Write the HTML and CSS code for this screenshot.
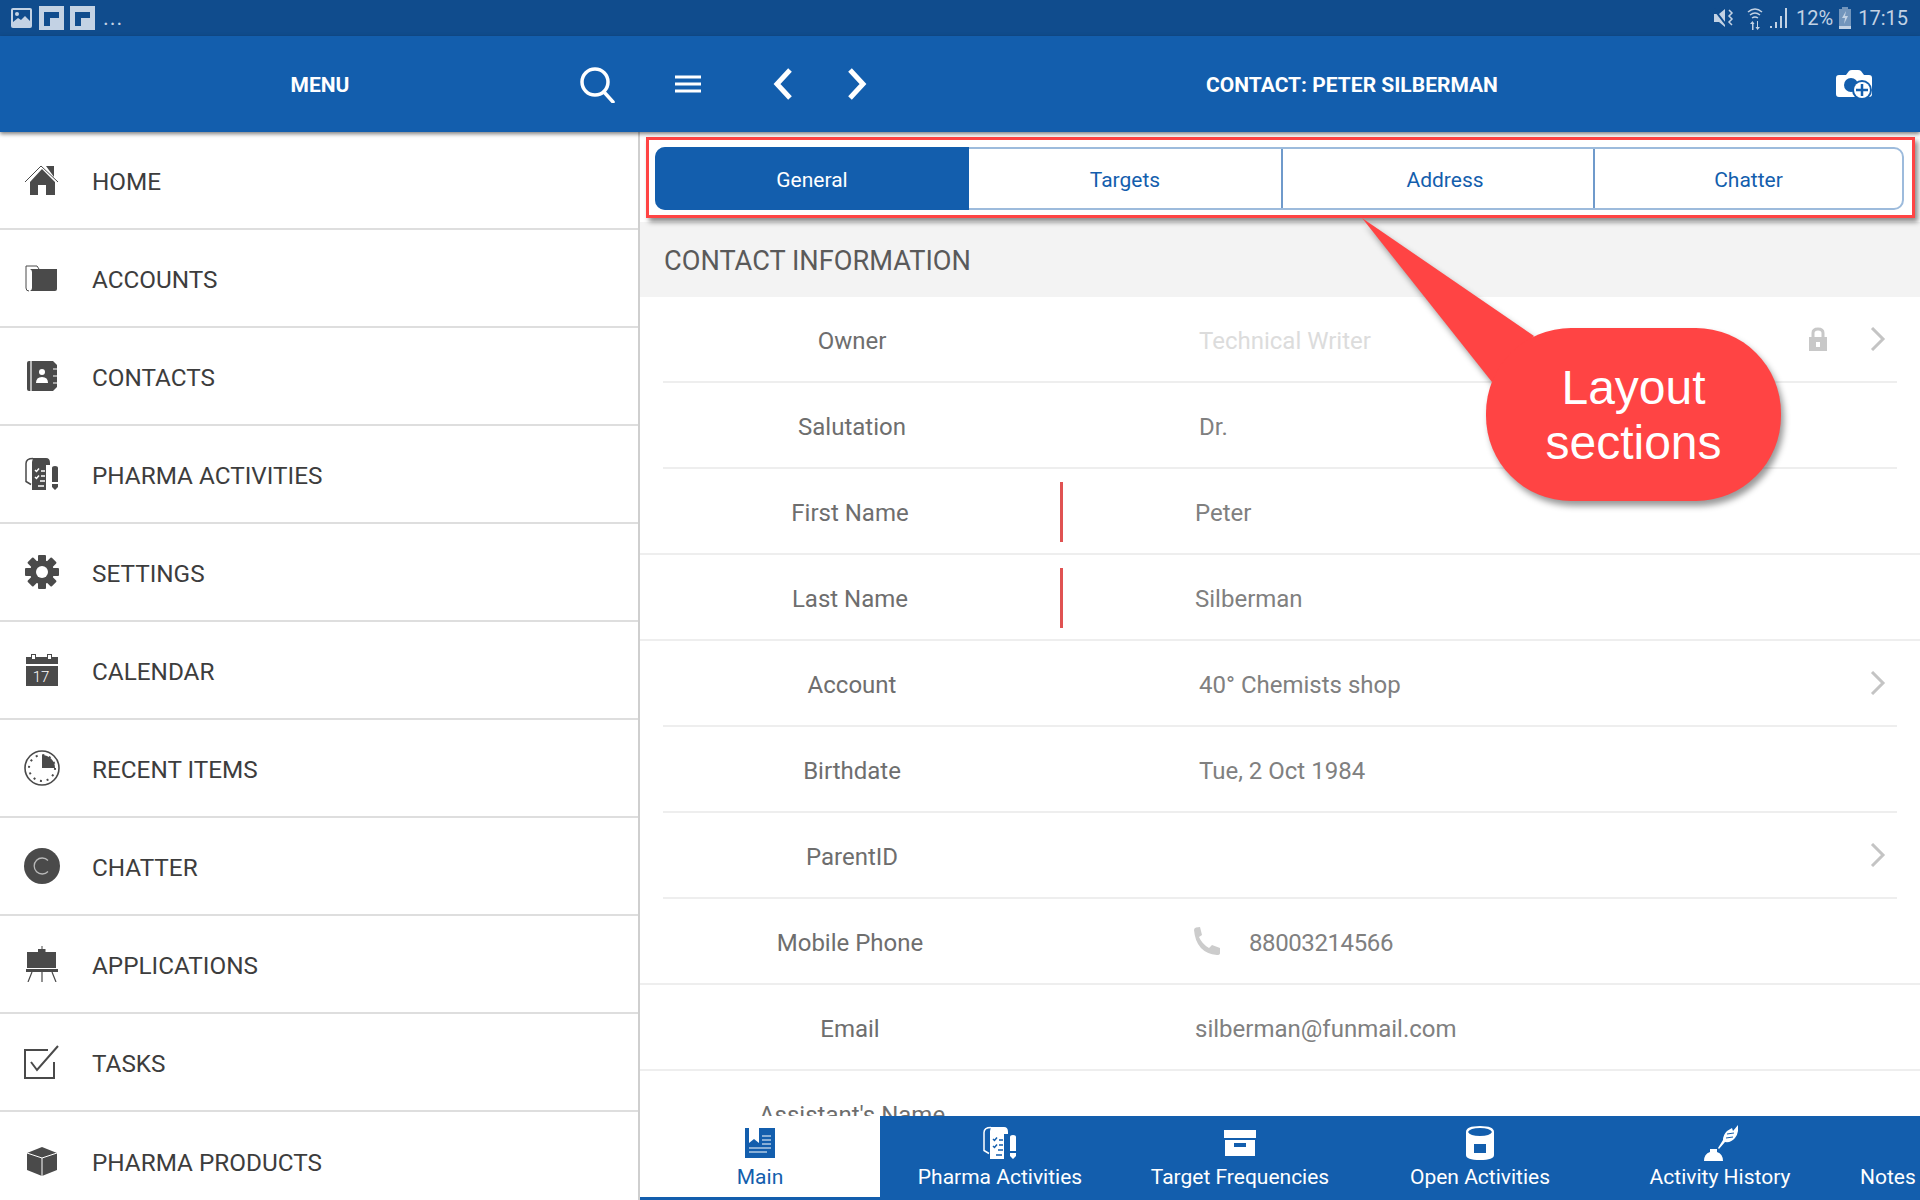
FILE: index.html
```html
<!DOCTYPE html>
<html>
  <head>
    <title>Contact: Peter Silberman</title>
    <link rel="stylesheet" href="styles.css">
  </head>
  <body>
    <svg class="defs" width="0" height="0">
      <symbol id="i-pharma" viewBox="0 0 36 36">
        <path d="M9 2h13q4 0 4 5v2h-4v25H8V6z"/>
        <path class="line" d="M9 2.500q-7 0-7 5v18l5 3" fill="none" stroke="currentColor" stroke-width="1.500"/>
        <path class="cut" d="M11 14l1.500 1.500 2.500-3M11 21l1.500 1.500 2.500-3M17 15h4M17 20h4M16 25h5M14 30h6" fill="none" stroke-width="1.500"/>
        <path d="M28 12q0-2 3-2t3 2v14h-6zM28 28h6v3l-3 3-3-3z"/>
      </symbol>
    </svg>

    <div class="statusbar">
      <div class="status-left">
        <svg class="st-img" viewBox="0 0 21 20"><rect width="21" height="20" rx="2"/><path class="st-cut" d="M2 2h17v11l-5-5-4 4-3-2-5 4z"/><circle cx="6" cy="6" r="2"/></svg>
        <svg class="st-tile" viewBox="0 0 25 24"><rect width="25" height="24"/><path class="st-cut" d="M5 6h15v7h-8v7H5z"/><path d="M11 12h9v1h-8v7h-1z"/></svg>
        <svg class="st-tile" viewBox="0 0 25 24"><rect width="25" height="24"/><path class="st-cut" d="M5 6h15v7h-8v7H5z"/><path d="M11 12h9v1h-8v7h-1z"/></svg>
        <span class="st-dots">...</span>
      </div>
      <div class="status-right">
        <svg class="st-mute" viewBox="0 0 20 20"><path d="M0 6h5l6-5v18l-6-5H0z"/><path class="st-slash" d="M0 1l13 17"/><path d="M15 2l3 3-3 3 3 3-3 3 3 3" fill="none" stroke="currentColor" stroke-width="1.500"/></svg>
        <svg class="st-wifi" viewBox="0 0 16 24"><path d="M1 6q7-6 14 0M3 9q5-4 10 0M5 12q3-2 6 0" fill="none" stroke="currentColor" stroke-width="1.500"/><path d="M5 24v-6l-2 0 2.500-3 2 3H6.500v6zM11 15v6h2l-2.500 3-2-3h1.500v-6z"/></svg>
        <svg class="st-signal" viewBox="0 0 18 20"><path d="M0 18h2v2H0zM5 14h2v6H5zM10 8h2v12h-2zM15 0h2v20h-2z"/></svg>
        <span class="st-percent">12%</span>
        <svg class="st-batt" viewBox="0 0 12 22"><path d="M3 0h6v2h3v20H0V2h3z" opacity=".55"/><path d="M0 19h12v3H0zM7 4l-4 7h3l-1 6 4-8H6z"/></svg>
        <span class="st-time">17:15</span>
      </div>
    </div>

    <div class="header">
      <div class="header-menu">
        <span></span>
        <span class="header-title">MENU</span>
        <svg class="ic-search" viewBox="0 0 36 36"><circle cx="15" cy="15" r="13"/><path d="M24 25l9 10"/></svg>
      </div>
      <div class="header-main">
        <div class="header-nav">
          <svg class="ic-burger" viewBox="0 0 30 20"><path d="M2 3h26M2 10h26M2 17h26"/></svg>
          <svg class="ic-chev" viewBox="0 0 22 34"><path d="M18 3L5 17l13 14"/></svg>
          <svg class="ic-chev ic-next" viewBox="0 0 22 34"><path d="M4 3l13 14L4 31"/></svg>
        </div>
        <span class="header-title header-contact">CONTACT: PETER SILBERMAN</span>
        <div class="header-action">
          <svg class="ic-camera" viewBox="0 0 36 32">
            <path d="M3 7h7l3-4q1-1 3-1h6q2 0 3 1l3 4h5q3 0 3 3v16q0 3-3 3H3q-3 0-3-3V10q0-3 3-3z" fill="#fff"/>
            <circle cx="15" cy="17" r="7" fill="#135ead"/>
            <circle cx="26" cy="22" r="10" fill="#135ead"/>
            <circle cx="26" cy="22" r="8" fill="#fff"/>
            <path d="M26 16v12M20 22h12" stroke="#135ead" stroke-width="2.500"/>
          </svg>
        </div>
      </div>
    </div>

    <div class="app">
      <div class="sidebar">
        <div class="menu-item">
          <svg class="menu-icon" viewBox="0 0 36 36"><path class="thin" d="M1 20L17 4l17 16" fill="none" stroke="currentColor" stroke-width="1"/><path d="M18 7l13 13v13h-9V23h-8v10H6V20zM22 4h8v11z"/></svg>
          <span>HOME</span>
        </div>
        <div class="menu-item">
          <svg class="menu-icon" viewBox="0 0 36 36"><path d="M5 31q-3 0-3-3V6h11l2 3" fill="none" stroke="currentColor" stroke-width="1"/><path d="M6 9h27v20q0 2-2 2H6q2-1 2-3V12q0-2-2-3z"/></svg>
          <span>ACCOUNTS</span>
        </div>
        <div class="menu-item">
          <svg class="menu-icon" viewBox="0 0 36 36"><path d="M5 3h24l4 4v22l-4 4H5q-2 0-2-2V5q0-2 2-2z"/><path class="cut" d="M7 3v30M29 11h4M29 18h4M29 25h4" fill="none" stroke-width="1.200"/><circle class="fill-cut" cx="18" cy="14" r="3"/><path class="fill-cut" d="M12 25q0-6 6-6t6 6z"/></svg>
          <span>CONTACTS</span>
        </div>
        <div class="menu-item">
          <svg class="menu-icon"><use href="#i-pharma"/></svg>
          <span>PHARMA ACTIVITIES</span>
        </div>
        <div class="menu-item">
          <svg class="menu-icon" viewBox="0 0 36 36">
            <circle cx="18" cy="18" r="12"/>
            <rect x="14" y="1" width="8" height="34" rx="1"/>
            <rect x="14" y="1" width="8" height="34" rx="1" transform="rotate(45 18 18)"/>
            <rect x="14" y="1" width="8" height="34" rx="1" transform="rotate(90 18 18)"/>
            <rect x="14" y="1" width="8" height="34" rx="1" transform="rotate(135 18 18)"/>
            <circle class="fill-cut" cx="18" cy="18" r="6"/>
          </svg>
          <span>SETTINGS</span>
        </div>
        <div class="menu-item">
          <svg class="menu-icon" viewBox="0 0 36 36"><path d="M2 5h5V2h5v3h11V2h5v3h6v7H2zM2 14h32v20H2z"/><path class="fill-cut" d="M8 3h3v4H8zM24 3h3v4h-3z"/><text class="cal-day" x="17" y="30">17</text></svg>
          <span>CALENDAR</span>
        </div>
        <div class="menu-item">
          <svg class="menu-icon" viewBox="0 0 36 36"><circle cx="18" cy="18" r="17" fill="none" stroke="currentColor" stroke-width="1.600"/><circle cx="18" cy="18" r="13" fill="none" stroke="currentColor" stroke-width="2" stroke-dasharray="2 4.800"/><path d="M18 5a13 13 0 0 1 13 13H18z"/></svg>
          <span>RECENT ITEMS</span>
        </div>
        <div class="menu-item">
          <svg class="menu-icon" viewBox="0 0 36 36"><circle cx="18" cy="18" r="18"/><path d="M24 12.500a8 8 0 1 0 0 11" fill="none" stroke="#b9b9b9" stroke-width="1.300"/></svg>
          <span>CHATTER</span>
        </div>
        <div class="menu-item">
          <svg class="menu-icon" viewBox="0 0 36 36"><path d="M17.500 0h1v3h3v3H32v16H3V6h11V3h3.500zM2 23h32v3H2z"/><path d="M8 26L4 36M18 26v10M28 26l4 10" fill="none" stroke="currentColor" stroke-width="1.200"/></svg>
          <span>APPLICATIONS</span>
        </div>
        <div class="menu-item">
          <svg class="menu-icon" viewBox="0 0 36 36"><path d="M24 6H1v28h29V18M7 18l6 8L34 2" fill="none" stroke="currentColor" stroke-width="2"/></svg>
          <span>TASKS</span>
        </div>
        <div class="menu-item">
          <svg class="menu-icon" viewBox="0 0 36 36"><path d="M18 4l15 6v17l-15 6-15-6V10z"/><path class="cut" d="M3 10l15 5 15-5M18 15v18" fill="none" stroke-width="1"/></svg>
          <span>PHARMA PRODUCTS</span>
        </div>
      </div>

      <div class="content">
        <div class="tabs-bar">
          <div class="tabs">
            <div class="tab tab-active">General</div>
            <div class="tab">Targets</div>
            <div class="tab tab-address">Address</div>
            <div class="tab tab-last">Chatter</div>
          </div>
          <div class="highlight"></div>
        </div>

        <div class="section-title">CONTACT INFORMATION</div>

        <div class="rows">
          <div class="row">
            <div class="label">Owner</div>
            <div class="value value-off">Technical Writer</div>
            <svg class="ic-lock" viewBox="0 0 18 24"><path d="M0 10h18v14H0zM7 15v5h4v-5z" fill-rule="evenodd"/><path d="M4 10V6q0-4 5-4t5 4v4" fill="none" stroke="currentColor" stroke-width="3"/></svg>
            <svg class="ic-more" viewBox="0 0 16 24"><path d="M2 1l11 11L2 23"/></svg>
          </div>
          <div class="row">
            <div class="label">Salutation</div>
            <div class="value">Dr.</div>
          </div>
          <div class="row row-full">
            <div class="label">First Name</div>
            <div class="required"></div>
            <div class="value">Peter</div>
          </div>
          <div class="row row-full">
            <div class="label">Last Name</div>
            <div class="required"></div>
            <div class="value">Silberman</div>
          </div>
          <div class="row">
            <div class="label">Account</div>
            <div class="value">40° Chemists shop</div>
            <svg class="ic-more" viewBox="0 0 16 24"><path d="M2 1l11 11L2 23"/></svg>
          </div>
          <div class="row">
            <div class="label">Birthdate</div>
            <div class="value">Tue, 2 Oct 1984</div>
          </div>
          <div class="row">
            <div class="label">ParentID</div>
            <div class="value"></div>
            <svg class="ic-more" viewBox="0 0 16 24"><path d="M2 1l11 11L2 23"/></svg>
          </div>
          <div class="row row-full row-plain">
            <div class="label">Mobile Phone</div>
            <div class="value value-phone">
              <svg class="ic-phone" viewBox="0 0 28 28"><path d="M1 3q0-2 2-2.500L7 0l2 8-3 2q3 7 10 11l3-3 8 3v5q0 2-3 2Q3 26 1 3z"/></svg>
              <span class="phone-number">88003214566</span>
            </div>
          </div>
          <div class="row row-full row-plain">
            <div class="label">Email</div>
            <div class="value">silberman@funmail.com</div>
          </div>
          <div class="row">
            <div class="label">Assistant's Name</div>
            <div class="value"></div>
          </div>
        </div>

        <div class="bottom-nav">
          <div class="bottom-item bottom-active">
            <svg class="bottom-icon" viewBox="-3 -3 36 36"><path d="M0 0h30v30H0z"/><path class="fill-cut" d="M4 0h10v15l-5-4-5 4z"/><path class="cut" d="M17 8h9M17 12h9M17 16h9M4 20h22M4 24h18" fill="none" stroke-width="1"/></svg>
            <span>Main</span>
          </div>
          <div class="bottom-item">
            <svg class="bottom-icon"><use href="#i-pharma"/></svg>
            <span>Pharma Activities</span>
          </div>
          <div class="bottom-item">
            <svg class="bottom-icon" viewBox="-2 -3 36 36"><path d="M0 2h32v8H0zM1 12h30v16H1zM10 15v4h12v-4z" fill-rule="evenodd"/></svg>
            <span>Target Frequencies</span>
          </div>
          <div class="bottom-item">
            <svg class="bottom-icon" viewBox="0 0 30 36"><path d="M1 7q0-6 14-6t14 6v23q0 5-14 5T1 30zM9 19v9h12v-9zM3 7q2 4 12 4t12-4q-2-4-12-4T3 7z" fill-rule="evenodd"/></svg>
            <span>Open Activities</span>
          </div>
          <div class="bottom-item">
            <svg class="bottom-icon" viewBox="0 0 36 36"><path d="M36 0q1 8-3 13t-10 4l-6 7-1-1 5-8q0-5 4-9l5-3 1 3z"/><path class="cut" d="M24 13l7-1M25 9l7-1" fill="none" stroke-width="1"/><path d="M8 24h7v3q6 2 6 9H2q0-7 6-9z"/></svg>
            <span>Activity History</span>
          </div>
          <div class="bottom-item bottom-notes">
            <span>Notes</span>
          </div>
        </div>
      </div>
    </div>

    <div class="callout">
      <svg class="callout-shape" viewBox="0 0 450 310"><path d="M12 8L184 126 142 172z"/><rect x="136" y="118" width="295" height="173" rx="85"/></svg>
      <div class="callout-text">Layout<br>sections</div>
    </div>
  </body>
</html>
```

FILE: styles.css
```css
* {
  box-sizing: border-box;
}
html, body {
  margin: 0;
  height: 1200px;
  overflow: hidden;
}
body {
  position: relative;
  background-color: white;
  font-family: Roboto, 'Liberation Sans', sans-serif;
  display: flex;
  flex-direction: column;
}
.defs {
  position: absolute;
}

/* status bar */
.statusbar {
  height: 36px;
  flex: none;
  background-color: #104c8d;
  color: #c3d2e4;
  fill: #c3d2e4;
  font-size: 20px;
  display: flex;
  justify-content: space-between;
  align-items: center;
  padding: 0 12px 0 11px;
}
.status-left, .status-right {
  display: flex;
  align-items: center;
}
.st-cut {
  fill: #104c8d;
}
.st-slash {
  fill: none;
  stroke: #104c8d;
  stroke-width: 2;
}
.st-img {
  width: 21px;
  height: 20px;
}
.st-tile {
  width: 25px;
  height: 24px;
  margin-left: 7px;
}
.st-tile + .st-tile {
  margin-left: 6px;
}
.st-dots {
  margin-left: 8px;
  line-height: 28px;
  font-size: 22px;
  letter-spacing: 1px;
}
.st-percent {
  margin-left: 8px;
}
.st-time {
  margin-left: 7px;
}
.st-mute {
  width: 20px;
  height: 20px;
  margin-right: 13px;
}
.st-wifi {
  width: 16px;
  height: 24px;
  margin-right: 7px;
}
.st-signal {
  width: 18px;
  height: 20px;
}
.st-batt {
  width: 12px;
  height: 22px;
  margin-left: 6px;
}

/* header */
.header {
  height: 96px;
  flex: none;
  background-color: #135ead;
  color: white;
  display: flex;
  position: relative;
  z-index: 2;
  box-shadow: 0 2px 4px rgba(0, 0, 0, 0.5);
}
.header-menu {
  width: 640px;
  display: grid;
  grid-template-columns: 1fr auto 1fr;
  align-items: center;
  padding-right: 24px;
  padding-left: 24px;
}
.header-title {
  font-size: 21px;
  font-weight: bold;
  margin-top: 1px;
}
.ic-search {
  width: 36px;
  height: 36px;
  justify-self: end;
  margin-top: 2px;
  fill: none;
  stroke: white;
  stroke-width: 3.5;
  stroke-linecap: round;
}
.header-main {
  flex: 1;
  display: flex;
  align-items: center;
}
.header-nav {
  width: 250px;
  display: flex;
  align-items: center;
  padding-left: 33px;
}
.ic-burger {
  width: 30px;
  height: 20px;
  fill: none;
  stroke: white;
  stroke-width: 3;
}
.ic-chev {
  width: 22px;
  height: 34px;
  margin-left: 69px;
  fill: none;
  stroke: white;
  stroke-width: 5;
}
.ic-next {
  margin-left: 52px;
}
.header-contact {
  flex: 1;
  text-align: center;
}
.header-action {
  width: 106px;
  display: flex;
  justify-content: flex-end;
  padding-right: 48px;
}
.ic-camera {
  width: 36px;
  height: 32px;
}

/* main area */
.app {
  flex: 1;
  min-height: 0;
  display: flex;
}
.sidebar {
  width: 640px;
  flex: none;
  overflow: hidden;
  border-right: 2px solid #cfcfcf;
}
.menu-item {
  height: 98px;
  border-bottom: 2px solid #dedede;
  display: flex;
  align-items: center;
  gap: 32px;
  padding-left: 24px;
  font-size: 24.3px;
  color: #3d3d3d;
}
.menu-item span {
  margin-top: 3px;
}
.menu-item:last-child {
  border-bottom: none;
}
.menu-icon {
  width: 36px;
  height: 36px;
  flex: none;
  color: #4a4a4a;
  fill: #4a4a4a;
  --cut: white;
}
.cut {
  stroke: var(--cut);
}
.fill-cut {
  fill: var(--cut);
}
.cal-day {
  fill: white;
  font-size: 15px;
  font-weight: 300;
  text-anchor: middle;
}

.content {
  flex: 1;
  min-width: 0;
  display: flex;
  flex-direction: column;
}

/* tabs */
.tabs-bar {
  height: 90px;
  flex: none;
  position: relative;
  padding: 15px 16px 12px 15px;
}
.tabs {
  height: 63px;
  display: flex;
  border: 2px solid #9dbbdc;
  border-radius: 10px;
}
.tab {
  width: 312px;
  flex: none;
  display: flex;
  align-items: center;
  justify-content: center;
  padding-top: 2px;
  font-size: 21px;
  color: #135ead;
  border-left: 2px solid #6f9acb;
}
.tab-active {
  width: 314px;
  background-color: #135ead;
  color: white;
  margin: -2px 0 -2px -2px;
  border-left: none;
  border-radius: 10px 0 0 10px;
}
.tab-active + .tab {
  border-left: none;
}
.tab-address {
  padding-left: 14px;
}
.tab-last {
  flex: 1;
  width: auto;
}
.highlight {
  position: absolute;
  left: 6px;
  top: 5px;
  width: 1269px;
  height: 81px;
  border: 3px solid #ff4444;
  box-shadow: 3px 4px 5px rgba(0, 0, 0, 0.45);
}

/* contact rows */
.section-title {
  height: 75px;
  flex: none;
  background-color: #f3f3f3;
  color: #5a5a5a;
  font-size: 27.2px;
  padding-left: 24px;
  padding-top: 3px;
  display: flex;
  align-items: center;
}
.rows {
  flex: 1;
  min-height: 0;
  overflow: hidden;
}
.row {
  height: 86px;
  margin: 0 23px;
  padding-top: 3px;
  padding-right: 11px;
  border-bottom: 2px solid #eeeeee;
  display: flex;
  align-items: center;
  font-size: 24px;
}
.row-full {
  margin: 0;
  padding-right: 0;
}
.label {
  width: 378px;
  flex: none;
  text-align: center;
  color: #6e6e6e;
}
.value {
  flex: 1;
  padding-left: 158px;
  color: #808080;
}
.value-off {
  color: #dcdcdc;
}
.row-full .label {
  width: 420px;
}
.row-full .value {
  padding-left: 132px;
}
.row-plain .value {
  padding-left: 135px;
}
.required {
  width: 3px;
  height: 60px;
  margin-bottom: 2px;
  background-color: #e05252;
}
.value-phone {
  display: flex;
  align-items: center;
  gap: 28px;
}
.row-plain .value-phone {
  padding-left: 133px;
}
.phone-number {
  letter-spacing: -0.4px;
}
.ic-phone {
  width: 28px;
  height: 28px;
  margin-bottom: 3px;
  fill: #cccccc;
}
.ic-lock {
  width: 18px;
  height: 24px;
  margin-right: 43px;
  margin-bottom: 3px;
  color: #c8c8c8;
  fill: #c8c8c8;
}
.ic-more {
  width: 16px;
  height: 24px;
  margin-bottom: 3px;
  fill: none;
  stroke: #c4c4c4;
  stroke-width: 3;
}

/* bottom nav */
.bottom-nav {
  height: 84px;
  flex: none;
  display: flex;
  background-color: #135ead;
  color: white;
  fill: white;
  font-size: 21px;
  overflow: hidden;
  --cut: #135ead;
}
.bottom-item {
  width: 240px;
  flex: none;
  display: flex;
  flex-direction: column;
  align-items: center;
  padding-top: 9px;
  gap: 4px;
}
.bottom-icon {
  width: 36px;
  height: 36px;
  color: white;
}
.bottom-active {
  background-color: white;
  color: #135ead;
  fill: #135ead;
  border-bottom: 3px solid #135ead;
  --cut: white;
}
.bottom-active .bottom-icon {
  color: #135ead;
}
.bottom-notes {
  width: 80px;
  padding-top: 49px;
  padding-left: 20px;
  align-items: flex-start;
}

/* annotation */
.callout {
  position: absolute;
  left: 1350px;
  top: 210px;
  width: 450px;
  height: 310px;
  z-index: 5;
}
.callout-shape {
  width: 450px;
  height: 310px;
  fill: #ff4444;
  filter: drop-shadow(3px 5px 3px rgba(0, 0, 0, 0.4));
}
.callout-text {
  position: absolute;
  left: 136px;
  top: 118px;
  width: 295px;
  height: 173px;
  display: flex;
  align-items: center;
  justify-content: center;
  text-align: center;
  color: white;
  font-family: 'Liberation Sans', Arial, sans-serif;
  font-size: 48px;
  line-height: 55px;
}
```
